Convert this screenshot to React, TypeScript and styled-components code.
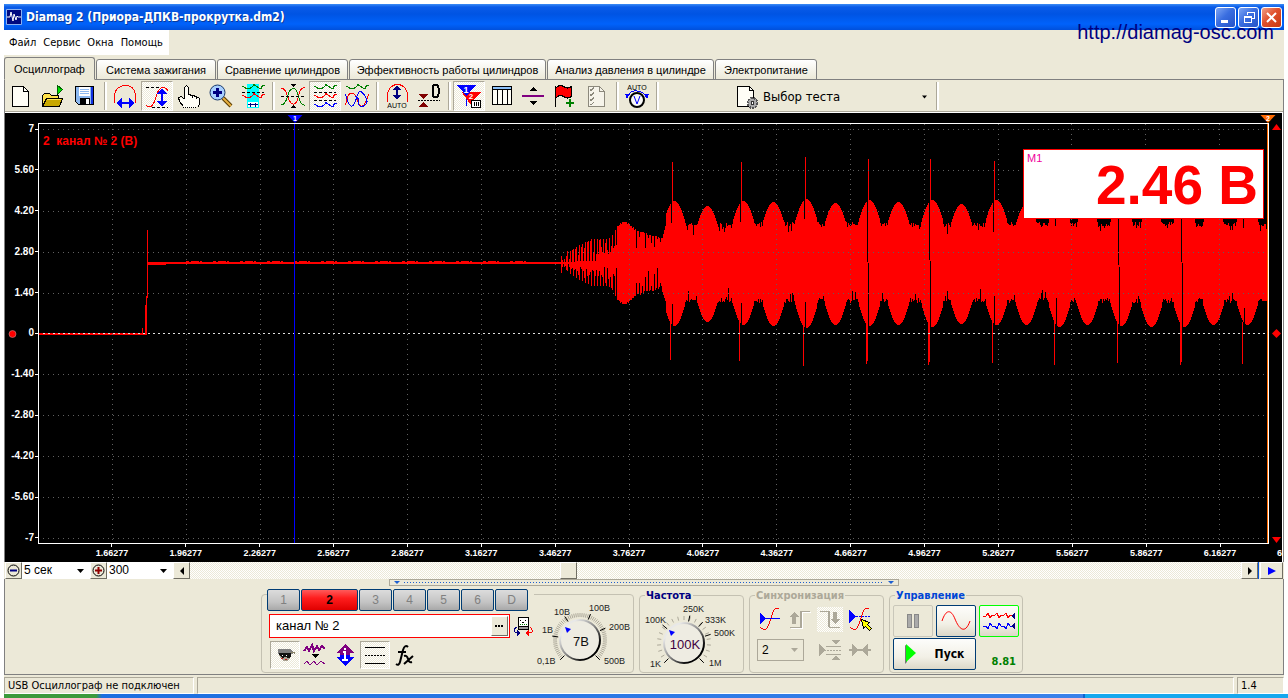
import React from "react";
import styled, { createGlobalStyle, css } from "styled-components";

const face = "#ece9d8";
const shade = "#aca899";
const sans = `"Liberation Sans", Arial, sans-serif`;
const ui = `"DejaVu Sans Condensed", "DejaVu Sans", Tahoma, sans-serif`;
const hatch = `repeating-conic-gradient(#ffffff 0 25%, ${face} 0 50%) 0 0 / 2px 2px`;

const Global = createGlobalStyle`
  * { box-sizing: border-box; }
  body { margin: 0; background: #fff; font-family: ${sans}; font-size: 11px; color: #000; }
  button, input, select { font: inherit; color: inherit; margin: 0; padding: 0; border-radius: 0; }
  svg { display: block; flex: none; }
`;

/* ---------- window frame ---------- */

const Page = styled.div`
  position: relative;
  display: flex;
  flex-direction: column;
  min-height: 100vh;
  padding: 4px 4px 0;
  background: #fff;
`;

const TitleBar = styled.header`
  display: flex;
  align-items: center;
  height: 26px;
  padding: 0 2px;
  gap: 4px;
  background: linear-gradient(#3c8cf5 0, #0a5be8 3px, #0054e3 10px, #0062fb 20px, #0050dc 100%);
`;

const Title = styled.h1`
  flex: 1;
  margin: 0;
  color: #fff;
  font: bold 12px/20px ${ui};
  white-space: nowrap;
  text-shadow: 1px 1px 0 #0a3a9a;
`;

const CaptionButtons = styled.div`
  display: flex;
  gap: 2px;
`;

const CaptionButton = styled.button<{ $close?: boolean }>`
  width: 21px;
  height: 21px;
  display: grid;
  place-items: center;
  border: 1px solid #fff;
  border-radius: 3px;
  background: ${(p) =>
    p.$close
      ? "linear-gradient(135deg, #f0a088, #e0502c 45%, #c83810)"
      : "linear-gradient(135deg, #7ea6f4, #3a6ee0 45%, #2452c8)"};
`;

const SiteLink = styled.a`
  position: absolute;
  top: 20px;
  right: 14px;
  font: 20px/24px ${sans};
  color: #000080;
  text-decoration: none;
`;

const Shell = styled.main`
  flex: 1;
  display: flex;
  flex-direction: column;
  background: ${face};
`;

const MenuBar = styled.nav`
  align-self: flex-start;
  display: flex;
  gap: 7px;
  height: 25px;
  padding: 0 6px 0 5px;
  background: #fff;
`;

const MenuItem = styled.button`
  border: 0;
  background: none;
  font: 11px/25px ${ui};
`;

/* ---------- tabs ---------- */

const Tabs = styled.div`
  display: flex;
  align-items: flex-end;
  gap: 1px;
  height: 25px;
  padding-top: 2px;
  box-shadow: inset 0 -1px 0 #808080;
`;

const Tab = styled.button<{ $active?: boolean; $width: number }>`
  flex: 0 1 ${(p) => p.$width}px;
  height: ${(p) => (p.$active ? 23 : 21)}px;
  border: 1px solid #808080;
  border-bottom-color: ${(p) => (p.$active ? face : "#808080")};
  border-radius: 3px 3px 0 0;
  background: ${(p) => (p.$active ? face : `linear-gradient(#fff, ${face})`)};
  font: 11px/18px ${sans};
  white-space: nowrap;
`;

/* ---------- toolbar ---------- */

const Toolbar = styled.div`
  display: flex;
  height: 33px;
  padding: 1px 0;
  border: 1px solid #808080;
  border-width: 0 1px;
  box-shadow: inset 0 -1px 0 #fff, inset 0 -2px 0 ${shade};
`;

const ToolButton = styled.button<{ $pressed?: boolean }>`
  width: 32px;
  height: 30px;
  display: grid;
  place-items: center;
  border: 1px solid transparent;
  background: none;
  ${(p) =>
    p.$pressed &&
    css`
      border-color: ${shade} #fff #fff ${shade};
      background: ${hatch};
    `}
`;

const Separator = styled.span`
  width: 8px;
  height: 28px;
  margin-top: 1px;
  display: flex;
  justify-content: center;
  &::before {
    content: "";
    width: 2px;
    border-left: 1px solid ${shade};
    background: #fff;
  }
`;

const TestButton = styled.button`
  display: flex;
  align-items: center;
  gap: 4px;
  width: 198px;
  margin-left: 74px;
  padding-right: 6px;
  border: 0;
  background: none;
  font: 13px/30px ${ui};
  text-align: left;
  span { flex: 1; }
`;

/* ---------- chart ---------- */

const Chart = styled.section`
  flex: 1;
  min-height: 260px;
  margin: 0 1px;
  display: grid;
  grid-template-columns: 33px minmax(0, 1fr) 13px;
  grid-template-rows: 10px minmax(0, 1fr) 18px;
  border-right: 1px solid #fff;
  background: #000;
  color: #fff;
  outline: 1px solid #808080;
  clip-path: inset(0 -1px 0 -1px);
`;

const MarkerRow = styled.div`
  grid-column: 2;
  position: relative;
`;

const Marker = styled.svg`
  position: absolute;
  bottom: 0;
  transform: translateX(-50%);
  overflow: visible;
`;

const YAxis = styled.ol`
  grid-column: 1;
  grid-row: 2;
  position: relative;
  display: flex;
  flex-direction: column;
  justify-content: space-between;
  margin: 0;
  padding: 0;
  list-style: none;
  font: bold 10px/12px ${sans};
  li { display: flex; align-items: center; justify-content: flex-end; gap: 1px; }
  li::after { content: ""; width: 3px; height: 1px; background: #fff; }
`;

const ZeroMark = styled.svg`
  position: absolute;
  left: 3px;
  top: 50%;
  transform: translateY(-50%);
`;

const Plot = styled.div`
  grid-column: 2;
  grid-row: 2;
  position: relative;
  border: 1px solid #fff;
  svg { width: 100%; height: 100%; position: absolute; }
`;

const PlotTitle = styled.h2`
  position: absolute;
  left: 4px;
  top: 9px;
  margin: 0;
  color: #f00;
  font: bold 12px/16px ${sans};
  white-space: pre;
`;

const Readout = styled.output`
  position: absolute;
  top: 25px;
  right: 4px;
  width: 241px;
  height: 70px;
  display: flex;
  justify-content: space-between;
  padding: 0 5px 0 3px;
  border: 1px solid #f00;
  background: #fff;
  small { color: #f0009c; font: 11px/17px ${sans}; }
  strong { color: #f00; font: bold 55px/70px ${sans}; }
`;

const RightGutter = styled.div`
  grid-column: 3;
  grid-row: 2;
  display: flex;
  flex-direction: column;
  align-items: center;
  justify-content: space-between;
  padding-left: 2px;
`;

const XAxis = styled.ol`
  grid-column: 2;
  grid-row: 3;
  display: grid;
  grid-template-columns: repeat(16, 1fr);
  margin: 0;
  padding: 0 12px 0 37px;
  list-style: none;
  font: bold 9px/12px ${sans};
  text-align: center;
  li::before { content: ""; display: block; width: 1px; height: 3px; margin: 0 auto; background: #fff; }
`;

const NextLabel = styled.span`
  grid-column: 3;
  grid-row: 3;
  padding: 3px 0 0 8px;
  overflow: hidden;
  font: bold 9px/12px ${sans};
`;

/* ---------- scroll strip ---------- */

const ScrollStrip = styled.div`
  display: flex;
  height: 17px;
  margin: 0 1px;
`;

const RaisedButton = styled.button<{ $width?: number }>`
  flex: none;
  width: ${(p) => p.$width ?? 17}px;
  display: grid;
  place-items: center;
  border: 1px solid;
  border-color: #fff #716f64 #716f64 #fff;
  background: ${face};
`;

const Combo = styled.label<{ $width: number }>`
  position: relative;
  width: ${(p) => p.$width}px;
  background: #fff;
  select {
    width: 100%;
    height: 17px;
    padding-left: 2px;
    border: 0;
    background: none;
    appearance: none;
    font: 12px/17px ${sans};
  }
  svg { position: absolute; right: 6px; top: 7px; pointer-events: none; }
`;

const Track = styled.div`
  flex: 1;
  display: flex;
  padding-left: 370px;
  background: ${hatch};
`;

const PlayGroup = styled.div`
  display: flex;
  padding-left: 1px;
  border-left: 1px solid #0054e3;
`;

/* ---------- control panel ---------- */

const Panel = styled.section`
  display: flex;
  flex-direction: column;
  align-items: center;
  height: 96px;
  border: 1px solid #808080;
  border-top: 0;
`;

const Splitter = styled.div`
  display: flex;
  align-items: center;
  gap: 4px;
  width: 510px;
  height: 7px;
  padding: 0 4px;
  border: 1px solid ${shade};
  &::before, &::after {
    content: "";
    border: 3px solid transparent;
    border-top-color: #1c5fd0;
    border-bottom: 0;
  }
  i { flex: 1; height: 1px; background: repeating-linear-gradient(90deg, #1c5fd0 0 1px, transparent 1px 3px); }
`;

const Groups = styled.div`
  display: flex;
  align-items: flex-end;
  gap: 5px;
  height: 87px;
  padding-right: 4px;
`;

const Group = styled.fieldset<{ $width: number; $tone?: string }>`
  width: ${(p) => p.$width}px;
  height: 84px;
  min-width: 0;
  margin: 0;
  padding: 0;
  border: 1px solid #c4c1b2;
  border-radius: 4px;
  legend {
    margin-left: 5px;
    padding: 0 1px;
    color: ${(p) => p.$tone};
    font: bold 11px/13px ${ui};
  }
`;

const ChannelGroup = styled.section`
  display: flex;
  width: 373px;
  height: 79px;
  border: 1px solid #c4c1b2;
  border-radius: 4px;
`;

const ChannelColumn = styled.div`
  display: flex;
  flex-direction: column;
  gap: 3px;
  width: 272px;
  margin-top: -6px;
  padding-left: 5px;
`;

const ChannelRow = styled.div`
  display: flex;
  gap: 1px;
  background: ${face};
`;

const ChannelButton = styled.button<{ $active?: boolean }>`
  width: ${(p) => (p.$active ? 57 : 33)}px;
  height: 22px;
  border: 1px solid #003c74;
  border-radius: 2px;
  color: ${(p) => (p.$active ? "#000" : "#808080")};
  font: ${(p) => (p.$active ? "bold" : "normal")} 12px/18px ${sans};
  background: ${(p) =>
    p.$active ? "linear-gradient(#ff5a5a, #ff1e1e 40%, #e00000)" : "linear-gradient(#dcdcdc, #c4c4c4 60%, #a8a8a8)"};
`;

const NameRow = styled.div`
  display: flex;
  align-items: center;
  gap: 3px;
  padding-left: 2px;
`;

const NameBox = styled.label`
  display: flex;
  width: 241px;
  height: 24px;
  padding: 1px;
  border: 1px solid #f00;
  background: #fff;
  input {
    flex: 1;
    min-width: 0;
    padding-left: 5px;
    border: 0;
    outline: 0;
    background: none;
    font: 13px/18px ${sans};
  }
`;

const IconRow = styled.div`
  display: flex;
  padding-left: 3px;
`;

const SmallTool = styled.button<{ $pressed?: boolean }>`
  width: 30px;
  height: 28px;
  display: grid;
  place-items: center;
  border: 1px solid transparent;
  background: none;
  ${(p) =>
    p.$pressed &&
    css`
      border-color: ${shade} #fff #fff ${shade};
      background: ${hatch};
    `}
`;

const SyncGrid = styled.div`
  display: grid;
  grid-template-columns: repeat(4, 30px);
  grid-template-rows: 28px 26px;
  gap: 4px 0;
  align-items: center;
  justify-items: center;
  margin: 3px 0 0 5px;
`;

const SyncButton = styled.button<{ $hatched?: boolean }>`
  width: 26px;
  height: 25px;
  display: grid;
  place-items: center;
  border: 0;
  background: ${(p) => (p.$hatched ? hatch : "none")};
`;

const SyncSelect = styled.label`
  grid-column: span 2;
  justify-self: start;
  position: relative;
  width: 47px;
  margin-left: 2px;
  select {
    width: 100%;
    height: 22px;
    padding-left: 4px;
    border: 1px solid ${shade};
    background: none;
    appearance: none;
    font: 12px/18px ${sans};
  }
  svg { position: absolute; right: 6px; top: 9px; pointer-events: none; }
`;

const ControlGrid = styled.div`
  display: grid;
  grid-template-columns: 40px 40px 40px;
  grid-template-rows: 32px 32px;
  gap: 1px 3px;
  margin: 3px 0 0 3px;
`;

const ControlButton = styled.button<{ $edge: string; $wide?: boolean }>`
  grid-column: ${(p) => (p.$wide ? "span 2" : "auto")};
  display: flex;
  align-items: center;
  justify-content: center;
  gap: 18px;
  border: 1px solid ${(p) => p.$edge};
  border-radius: 2px;
  background: linear-gradient(#fdfdfb, #f2f0e6 60%, #dcd8c8);
  font: bold 12px/18px ${ui};
  &:disabled { background: ${face}; }
`;

const Rate = styled.output`
  align-self: end;
  justify-self: end;
  padding-right: 3px;
  color: #008000;
  font: bold 11px/16px ${ui};
`;

/* ---------- status ---------- */

const StatusBar = styled.footer`
  display: flex;
  gap: 3px;
  height: 19px;
  padding-top: 2px;
  background: ${face};
`;

const StatusCell = styled.span<{ $width?: number }>`
  flex: ${(p) => (p.$width ? `0 0 ${p.$width}px` : "1")};
  padding-left: 3px;
  border: 1px solid;
  border-color: ${shade} #fff #fff ${shade};
  font: 11px/15px ${ui};
  white-space: nowrap;
`;

const TaskStrip = styled.div`
  height: 4px;
  margin: 0 -4px 0 0;
  background: linear-gradient(90deg, #3c9a3c 0 92px, #1c6fe0 98px, #3a82ea 1079px, #0f62d0 1079px 1081px, #16a8ee 1081px);
`;

/* ---------- trace data ---------- */

const noise = (n: number) => {
  const v = Math.sin(n * 127.1 + 11.7) * 43758.5453;
  return v - Math.floor(v);
};

// Lobes of the running signal: centre x, top y, bottom y
const lobes = [
  [674, 201, 326], [707, 206, 322], [743, 201, 325], [773, 202, 326], [806, 199, 328], [835, 203, 325],
  [869, 200, 326], [898, 202, 325], [932, 200, 327], [961, 204, 324], [996, 200, 325], [1026, 204, 325],
  [1059, 200, 327], [1087, 204, 325], [1121, 200, 326], [1151, 204, 327], [1184, 200, 327], [1213, 204, 325],
  [1247, 200, 325], [1279, 204, 324],
];

// Tooth-gap spikes: x, top y, bottom y, inner slit end on top, slit start below
const spikes = [
  [671, 162, 360, 223, 304], [740, 162, 361, 222, 303], [804, 157, 366, 219, 302], [867, 159, 364, 262, 263],
  [929, 159, 365, 260, 261], [993, 161, 363, 232, 296], [1055, 160, 365, 226, 298], [1118, 160, 363, 265, 267],
  [1181, 160, 365, 262, 263], [1243, 160, 364, 228, 308],
];

function buildTrace() {
  const bars: string[] = [];
  const bar = (x: number, a: number, b: number) => bars.push(`M${x}.5 ${Math.round(a)}V${Math.round(b)}`);
  for (let x = 564; x < 662; x++) {
    let up: number;
    let down: number;
    if (x < 590) {
      const t = Math.sqrt((x - 563) / 27);
      up = 263 - 23 * t;
      down = 263 + 22 * t;
    } else if (x < 610) {
      up = 239 - noise(x);
      down = 286 + noise(x);
    } else if (x < 638) {
      const t = Math.sin(((x - 610) / 28) * Math.PI);
      up = 238 - 17 * t + noise(x) * 2 - (x > 624 ? (x - 624) / 2 : 0) * (1 - t);
      down = 287 + 18 * t - noise(x) * 2 + (x > 624 ? (x - 624) / 2 : 0) * (1 - t);
    } else {
      const t = (x - 638) / 24;
      up = 230 + 8 * t + noise(x) * 2;
      down = 296 - 8 * t - noise(x + 3) * 3;
    }
    if (x < 617) {
      const phase = x % 3;
      if (phase === 1) {
        const weak = x < 596 ? 0.1 : 0.35 + 0.3 * noise(x);
        up = 263 - (263 - up) * weak;
        down = 263 + (down - 263) * (0.1 + 0.5 * noise(x * 2));
      } else if (phase === 2) {
        up = 263 - (263 - up) * (0.3 + 0.7 * noise(x * 3));
        down = 263 + (down - 263) * (0.3 + 0.7 * noise(x * 7));
      }
    } else if (x > 633 && x % 3 === 0) {
      up += 18 * noise(x * 7);
      down -= 22 * noise(x * 9);
    }
    bar(x, up, Math.max(down, 264));
  }
  for (let x = 662; x < 1268; x++) {
    let up = 222 + 5 * noise(x) + (noise(x * 3) > 0.85 ? 9 * noise(x * 2) : 0);
    let down = 303 - 5 * noise(x + 2) - (noise(x * 4) > 0.87 ? 12 * noise(x * 6) : 0);
    for (const [c, top, bottom] of lobes) {
      const d = Math.abs(x - c) / 15;
      if (d < 1) {
        const t = Math.cos((d * Math.PI) / 2);
        const ripple = t < 0.5 ? 3 * noise(x * 11) : 0;
        up = Math.min(up, top + 36 * (1 - t) + ripple);
        down = Math.max(down, bottom - 39 * (1 - t) - ripple);
      }
    }
    if (x < 666) {
      up = Math.max(up, 222 + (666 - x) * 4);
      down = Math.min(down, 304 - (666 - x) * 3);
    }
    bar(x, up, down);
  }
  return bars.join("");
}

const trace = buildTrace();
const slits = spikes.map(([x, , , a, b]) => `M${x}.5 199V${a}M${x + 1}.5 ${b}V328`).join("");
const needles = spikes
  .map(([x, top, bottom]) => `M${x + 1}.5 ${top}V203M${x - 1}.5 322V${bottom}${x === 929 || x === 1181 || x === 867 ? `M${x}.5 324V${bottom - 3}` : ""}`)
  .join("");

const yLabels = ["7", "5.60", "4.20", "2.80", "1.40", "0", "-1.40", "-2.80", "-4.20", "-5.60", "-7"];
const xLabels = Array.from({ length: 16 }, (_, i) => (1.66277 + i * 0.3).toFixed(5));
const gridX = xLabels.map((_, i) => Math.round(112 + i * 73.8));
const gridY = yLabels.map((_, i) => Math.round(129 + i * 40.9));

/* ---------- drawings ---------- */

const Ico = ({ children, w = 24, h = 24, smooth }: { children: React.ReactNode; w?: number; h?: number; smooth?: boolean }) => (
  <svg width={w} height={h} viewBox={`0 0 ${w} ${h}`} fill="none" stroke="#000" shapeRendering={smooth ? "auto" : "crispEdges"} aria-hidden="true">
    {children}
  </svg>
);

const Down = ({ color = "#000", size = 7 }: { color?: string; size?: number }) => (
  <svg width={size} height="4" viewBox="0 0 7 4" fill={color} aria-hidden="true"><path d="M0 0h7L3.500 4z" /></svg>
);

const wave = (y: number) => `M0.500 ${y - 2}q2 0 4 2t5 0 3-3 4 2 4 1 3-3`;
const glyph = { fontFamily: "Liberation Sans, sans-serif", stroke: "none" };

const IconNew = () => <Ico><path fill="#fffef6" d="M3.500 2.500h11l5 5v15h-16z" /><path d="M14.500 2.500v5h5" /></Ico>;
const IconOpen = () => (
  <Ico>
    <path fill="#ffe14a" d="M1.500 22V11.500l2-2h5l2 2h7v3" />
    <path fill="#c8a800" d="M1.500 22.500l4-8h16l-3 8z" /><path stroke="#ffe85a" d="M6 15.500h14" />
    <path fill="#00e000" stroke="#006000" d="M16.500 1.500v9l5-5z" /><path d="M16.500 10v2" />
  </Ico>
);
const IconSave = () => (
  <Ico>
    <path fill="#8cb8f0" d="M2.500 2.500h18v18h-15l-3-3z" /><path fill="#1030e0" stroke="none" d="M18 3h2v17h-2z" />
    <path fill="#fff" stroke="none" d="M6 3h11v9H6z" /><path stroke="#8cb8f0" d="M7 5.500h9M7 7.500h9M7 9.500h9" />
    <path fill="#000" stroke="none" d="M7 14h10v7H7z" /><path fill="#fff" stroke="none" d="M13 15h3v5h-3z" />
  </Ico>
);
const IconArc = () => (
  <Ico><path stroke="#f00" d="M1.500 18.500v-6C1.500 5 7 1.500 12.500 1.500S22.500 5 22.500 12.500v6" />
    <path stroke="#00f" strokeWidth="2" d="M5 19h14" /><path fill="#00f" stroke="none" d="M3 19l6-5v10zM22 19l-6-5v10z" /></Ico>
);
const IconAmp = () => (
  <Ico><path strokeDasharray="3 2" d="M1 3.500h15M7 23.500h16" /><path stroke="#f00" d="M1 21.500q5 4 8-3l4-11q3-6 8-3l2 2" />
    <path stroke="#00f" strokeWidth="2" d="M17 8v11" /><path fill="#00f" stroke="none" d="M17 4l5 6H12zM17 23l5-6H12z" /></Ico>
);
const IconHand = () => (
  <Ico><path fill="#fffef6" stroke="none" d="M8 2l3 1v7l11 4v6l-3 4H7l-5-8 1-2 4 1z" />
    <path d="M7.500 15V3.500l2-2 2 2V11M11.500 10.500l4 1v2M15.500 11.500l4 1v2M19.500 12.500l3 2v6l-2 3M7.500 15.500l-3-3-3 1 1 4 4 5" />
    <path strokeDasharray="1 1" d="M6 23.500h14" /></Ico>
);
const IconZoom = () => (
  <Ico smooth><path stroke="#5a3c00" strokeWidth="4" d="M14 14l8 8" /><path stroke="#e8b040" strokeWidth="2" d="M14 14l8 8" />
    <circle cx="8.500" cy="8.500" r="7.500" fill="#a8d0ff" stroke="#1a3a6a" /><path stroke="#000080" strokeWidth="3" d="M4 8.500h9M8.500 4v9" /></Ico>
);
const IconCompare = () => (
  <Ico><path fill="#0ff" stroke="none" d="M6 0h12v18H6z" /><path fill="#fff" stroke="#0ff" d="M6.500 17.500h11v6h-11z" />
    <path stroke="#008000" d={wave(4)} /><path stroke="#f00" d={wave(13)} /><path strokeDasharray="3 2" d="M1 8.500h22" />
    <path stroke="#000080" d="M7 20.500h10M9.500 18.500v4M14.500 18.500v4" /></Ico>
);
const IconCross = () => (
  <Ico><path stroke="#f00" d="M0.500 4q4 1 6 8t5.500 8 5.500-8 6-8" />
    <path stroke="#008000" d="M0.500 21q4-1 6-8.500T12 4.500t5.500 8 6 8.500" /><path strokeDasharray="3 2" d="M0 12.500h24" />
    <path fill="#000" stroke="none" d="M9 0h6l-3 3zM9 24h6l-3-3z" /></Ico>
);
const IconTriple = () => (
  <Ico><path stroke="#008000" d={wave(4)} /><path stroke="#f00" d={wave(13)} /><path stroke="#00f" d={wave(22)} />
    <path strokeDasharray="3 2" d="M1 8.500h22M1 16.500h22" /></Ico>
);
const IconOverlay = () => (
  <Ico><path stroke="#008000" d={wave(4)} /><path stroke="#f00" d="M0.500 21q2-12 6-12t6 7 5 6 6-12" /><path stroke="#00f" d="M0.500 10q3 12 6 12t5-8 5-6 5 7-3 7-5-4-3-5" /></Ico>
);
const IconAutoV = () => (
  <Ico><path stroke="#f00" d="M2.500 18v-6C2.500 5 7 .5 12.500 .5S22.500 5 22.500 12v6" /><path stroke="#000080" strokeWidth="2" d="M12 4v9" />
    <path fill="#000080" stroke="none" d="M12 1l4 5H8zM12 16l4-5H8z" /><text x="12" y="24" textAnchor="middle" fontSize="7" fill="#000" {...glyph}>AUTO</text></Ico>
);
const IconZero = () => (
  <Ico><path fill="#800000" stroke="none" d="M1 10h10l-5 5zM1 23h10l-5-5z" /><path strokeDasharray="2 1" d="M1 16.500h22" />
    <rect x="15.500" y="1" width="6" height="12" rx="3" strokeWidth="2" /></Ico>
);
const IconMarkers = () => (
  <Ico><path stroke="#00f" d="M9.500 9v13" /><path fill="#f00" stroke="#f00" d="M5 8.500h18l-8 8v6" /><path fill="#00f" stroke="none" d="M0 1h19L9.500 12z" />
    <text x="9" y="9" textAnchor="middle" fontSize="9" fontWeight="bold" fill="#fff" {...glyph}>1</text>
    <text x="14" y="15" textAnchor="middle" fontSize="8" fontWeight="bold" fill="#fff" {...glyph}>2</text>
    <path fill="#fff" d="M14.500 16.500h9v7h-9z" /><path d="M17.500 18v4M19.500 18v4M21.500 18v4" /></Ico>
);
const IconTable = () => (
  <Ico><path fill="#fffef6" d="M3.500 2.500h19v18h-19z" /><path fill="#8cc0f8" d="M3.500 2.500h19v3h-19z" /><path d="M8.500 6v14M13.500 6v14M18.500 6v14" /></Ico>
);
const IconSplit = () => (
  <Ico><path stroke="#800080" strokeWidth="2" d="M1 12h22" /><path fill="#000" stroke="none" d="M8 7h8l-4-4zM8 17h8l-4 4z" /></Ico>
);
const IconFlag = () => (
  <Ico><path fill="#f00" d="M2.500 4.500q4-5 8-2t8 0v10q-4 3-8 0t-8 2z" /><path d="M2.500 2v21" /><path stroke="#008000" strokeWidth="2" d="M13 19h8M17 15v8" /></Ico>
);
const IconList = () => (
  <Ico><path fill="#f6f4ea" stroke="#8c897c" d="M3.500 2.500h11l5 5v15h-16z" /><path stroke="#8c897c" d="M14.500 2.500v5h5M5 5.500l1 1 3-3M5 10.500l1 1 3-3M5 15.500l1 1 3-3M5 20l1 1 3-3" /></Ico>
);
const IconAutoKnob = () => (
  <Ico><text x="12" y="6" textAnchor="middle" fontSize="7" fill="#000" {...glyph}>AUTO</text>
    <path stroke="#00f" d="M2 13q3-7 10-6t10 6" /><path fill="#00f" stroke="none" d="M0 10l5 0-3 5zM24 10h-5l3 5z" />
    <circle cx="12" cy="16" r="7" fill="#f8f8f8" strokeWidth="2" shapeRendering="auto" /><path stroke="#00f" d="M9 12l3 8 3-8" shapeRendering="auto" /></Ico>
);
const IconTest = () => (
  <Ico><path fill="#fffef6" d="M2.500 1.500h12l4 4v16h-16z" /><path d="M14.500 1.500v4h4" />
    <circle cx="17.500" cy="18" r="5" fill="#aaa" stroke="#555" strokeWidth="2" strokeDasharray="2 1" /><circle cx="17.500" cy="18" r="1.500" fill="#fff" stroke="#333" /></Ico>
);
const IconApp = () => (
  <svg width="16" height="16" viewBox="0 0 16 16" aria-hidden="true"><path fill="#000a80" stroke="#8ab0f0" d="M.5 .5h15v15H.5z" />
    <path fill="none" stroke="#fff" d="M1 8h3l1-5 2 9 1-7 2 6 1-4 1 1h3" /></svg>
);

const IconEye = () => (
  <Ico h={20}><path fill="#808080" stroke="none" d="M5 4h13l2 3v2H5z" /><path fill="#a8a090" stroke="none" d="M6 9h12l-1 5-3 2h-4l-3-3z" />
    <path fill="#111" stroke="none" d="M6 8h12v4l-3 1-3-1-3 1-2-2z" /><path stroke="#8a8468" d="M18 7h3v2" /><path stroke="#c02020" d="M8 13.500h2M12 14.500h2" /><path stroke="#fff" d="M9 10.500h1M13 10.500h1" /></Ico>
);
const IconFilter = () => (
  <Ico><path stroke="#800080" strokeWidth="2" d="M1 8l3-4 2 4 3-6 2 6 3-5 2 4 3-4 3 3" /><path fill="#000" stroke="none" d="M8 11h8l-4 4z" />
    <path stroke="#800080" d="M1 21l3-3 3 4 4-4 3 4 4-4 4 3" /></Ico>
);
const IconInvert = () => (
  <Ico><path fill="#800080" stroke="none" d="M12 1l9 9h-4v2H7v-2H3z" /><path fill="#00f" stroke="none" d="M12 23l9-9h-4v-2H7v2H3z" /><path stroke="#fff" strokeWidth="2" d="M10 9h2v7M9 17h6M12 5v2" /></Ico>
);
const IconLines = () => <Ico><path d="M2 4.500h20M2 20.500h20" /><path strokeDasharray="2 1" d="M2 12.500h20" /></Ico>;
const IconFx = () => (
  <Ico smooth><path strokeWidth="2" d="M15 4q-3-3-5 3L7 19q-1 4-4 2M5 9h8" /><path strokeWidth="2" d="M11 13q3-1 4 3t4 3M20 13l-9 8" /></Ico>
);
const IconProbe = () => (
  <Ico w={20} h={20}><path fill="#fff" d="M5.500 1.500h10v9h-10z" /><path fill="#9a9a9a" d="M5.500 10.500h10v3h-10z" /><path stroke="#008000" strokeDasharray="1 1" d="M7 8.500h7" /><path d="M7 4h1M12 4h1M9 6h2" />
    <path stroke="#000080" d="M4 11q-4 2-2 5l4 1" /><path fill="#000080" stroke="none" d="M4 14l4 3-4 3z" />
    <path stroke="#f00" d="M17 11q3 2 2 5l-4 1" /><path fill="#f00" stroke="none" d="M16 14l-4 3 4 3z" /></Ico>
);
const IconTrig = ({ dashed }: { dashed?: boolean }) => (
  <Ico><path stroke="#f00" d="M2 20q6 6 9-3l4-12q2-5 6-3" /><path stroke="#00f" strokeDasharray={dashed ? "2 1" : undefined} d={dashed ? "M2 9.500h21" : "M2 11.500h20"} />
    <path fill="#00f" stroke="none" d={dashed ? "M1 3l7 6-7 7z" : "M2 6l6 5-6 6z"} />
    {dashed && <path fill="#ff0" stroke="#000" d="M13.500 12.500l8 3-2 2 4 4-2 2-4-4-2 2z" />}</Ico>
);
const IconRise = () => <Ico><path stroke="#fff" d="M3 21.500h11V5.500h9" /><path stroke={shade} d="M2 20.500h11V4.500h9M12.500 4v16" strokeWidth="1" /><path fill={shade} stroke="none" d="M6 5l5 5H8v7H4v-7H1z" /></Ico>;
const IconFall = () => <Ico><path stroke={shade} d="M2 4.500h9v16h11M10.500 5v15" /><path fill={shade} stroke="none" d="M17 17l5-5h-3V5h-4v7h-3z" /></Ico>;
const IconLevel = () => (
  <Ico><path fill={shade} stroke="none" d="M1 6l6 6-6 6zM13 2h10l-5 4zM13 22h10l-5-4z" /><path stroke={shade} d="M8 8.500h15M8 16.500h15" /><path stroke={shade} strokeDasharray="2 1" d="M6 12.500h17" /></Ico>
);
const IconSqueeze = () => (
  <Ico><path fill={shade} stroke="none" d="M4 6l7 6-7 6zM20 6l-7 6 7 6z" /><path stroke={shade} strokeWidth="2" d="M1 12h22" /></Ico>
);

type DialLabel = [string, number, number];

const Dial = ({ w, cx, cy, value, tone, ticks, labels, marks, label }: {
  w: number; cx: number; cy: number; value: string; tone: string; ticks: number; labels: DialLabel[]; marks: number[]; label: string;
}) => {
  const ray = (deg: number, a: number, b: number) => {
    const r = (deg * Math.PI) / 180;
    return `M${cx + a * Math.sin(r)} ${cy - a * Math.cos(r)}L${cx + b * Math.sin(r)} ${cy - b * Math.cos(r)}`;
  };
  const id = `rim-${label}`;
  return (
    <svg width={w} height="76" viewBox={`0 0 ${w} 76`} role="img" aria-label={`${label} ${value}`} fontFamily="Liberation Sans, Arial, sans-serif" fontSize="9">
      <defs>
        <linearGradient id={id} x1="0" y1="0" x2="1" y2="1">
          <stop offset="0.2" stopColor="#e8e8e8" /><stop offset="0.5" stopColor="#888" /><stop offset="0.8" stopColor="#000" />
        </linearGradient>
      </defs>
      <path stroke={shade} fill="none" d={Array.from({ length: ticks + 1 }, (_, i) => ray(-135 + (270 / ticks) * i, 23, 27)).join("")} />
      <path stroke="#000" fill="none" d={marks.map((m) => ray(m, 22, 28)).join("")} />
      <circle cx={cx} cy={cy} r="20" fill="#eeece2" stroke={`url(#${id})`} strokeWidth="2" />
      <path fill="#00f" d={`M${cx - 15} ${cy - 13}l6 2-4 4z`} />
      <text x={cx + 1} y={cy + 6} textAnchor="middle" fontSize="13" fill={tone}>{value}</text>
      {labels.map(([t, x, y]) => <text key={t} x={x} y={y} fill="#222">{t}</text>)}
    </svg>
  );
};

/* ---------- screen ---------- */

const tools: (null | [string, () => React.ReactElement, boolean?])[] = [
  ["Новый", IconNew], ["Открыть", IconOpen], ["Сохранить", IconSave], null,
  ["Развёртка", IconArc], ["Амплитуда", IconAmp, true], ["Рука", IconHand], ["Лупа", IconZoom], ["Сравнение", IconCompare], null,
  ["Наложение", IconCross], ["Раздельно", IconTriple, true], ["Вместе", IconOverlay], null,
  ["Авто", IconAutoV], ["Ноль", IconZero], null,
  ["Маркеры", IconMarkers, true], ["Таблица", IconTable], ["Разделить", IconSplit], ["Флаг", IconFlag], ["Список", IconList], null,
  ["Автодиапазон", IconAutoKnob], null,
];

const tabs: [string, number][] = [
  ["Осциллограф", 91], ["Система зажигания", 120], ["Сравнение цилиндров", 131],
  ["Эффективность работы цилиндров", 197], ["Анализ давления в цилиндре", 167], ["Электропитание", 102],
];

export default function App() {
  return (
    <>
      <Global />
      <Page>
        <TitleBar>
          <IconApp />
          <Title>Diamag 2 (Приора-ДПКВ-прокрутка.dm2)</Title>
          <CaptionButtons>
            <CaptionButton aria-label="Свернуть"><Ico w={13} h={13}><path stroke="#fff" strokeWidth="3" d="M2 10.500h7" /></Ico></CaptionButton>
            <CaptionButton aria-label="Восстановить"><Ico w={13} h={13}><path stroke="#fff" d="M5 1.500h7v6h-2M5.500 4V2M2 5.500h7v6H2.500V5M2 6.500h7" /></Ico></CaptionButton>
            <CaptionButton $close aria-label="Закрыть"><Ico w={13} h={13} smooth><path stroke="#fff" strokeWidth="2" d="M2 2l9 9M11 2l-9 9" /></Ico></CaptionButton>
          </CaptionButtons>
        </TitleBar>
        <SiteLink href="http://diamag-osc.com">http://diamag-osc.com</SiteLink>
        <Shell>
          <MenuBar>
            {["Файл", "Сервис", "Окна", "Помощь"].map((m) => <MenuItem key={m}>{m}</MenuItem>)}
          </MenuBar>
          <Tabs role="tablist">
            {tabs.map(([t, w], i) => <Tab key={t} role="tab" $active={i === 0} $width={w}>{t}</Tab>)}
          </Tabs>
          <Toolbar>
            {tools.map((t, i) => {
              if (!t) return <Separator key={i} />;
              const [name, Icon, pressed] = t;
              return <ToolButton key={i} aria-label={name} $pressed={pressed}><Icon /></ToolButton>;
            })}
            <TestButton><IconTest /><span>Выбор теста</span><Down size={5} /></TestButton>
            <Separator />
          </Toolbar>

          <Chart>
            <MarkerRow>
              <Marker width="15" height="8" viewBox="0 0 15 8" style={{ left: "20.840%" }}>
                <path fill="#00f" d="M0 0h15L7.500 8z" /><text x="7.500" y="6" textAnchor="middle" fontSize="7" fontWeight="bold" fill="#fff" fontFamily="Liberation Sans, sans-serif">1</text>
              </Marker>
              <Marker width="15" height="8" viewBox="0 0 15 8" style={{ left: "99.900%" }}>
                <path fill="#ff6a00" d="M0 0h15L7.500 8z" /><text x="7.500" y="6" textAnchor="middle" fontSize="7" fontWeight="bold" fill="#fff" fontFamily="Liberation Sans, sans-serif">2</text>
              </Marker>
            </MarkerRow>
            <YAxis>
              {yLabels.map((y) => <li key={y}>{y}</li>)}
              <ZeroMark width="9" height="9" viewBox="0 0 9 9"><circle cx="4.500" cy="4.500" r="3.500" fill="#f00" stroke="#c88" strokeOpacity="0.6" /></ZeroMark>
            </YAxis>
            <Plot>
              <svg viewBox="39 124 1229 419" preserveAspectRatio="none" fill="none" shapeRendering="crispEdges" aria-hidden="true">
                <path stroke="#f00" d={trace} />
                <path stroke="#000" d={slits} />
                <path stroke="#f00" d={needles} />
                <path stroke="#f00" strokeWidth="2" d="M39 334H146M148 263H566" />
                <path stroke="#f00" d="M146.500 335V296M147.500 298V230M145.500 334V305M148 264.500H166M142.500 328V334M561.500 256V273M562.500 260V267M567.500 251V264" />
                <path stroke="#f00" strokeDasharray="3 2 8 1 2 11" d="M186 261.500H532" />
                <path stroke="#606060" strokeDasharray="1 4" d={gridY.filter((_, i) => i !== 5).map((y) => `M43 ${y}.5H1268`).join("")} />
                <path stroke="#606060" strokeDasharray="1 4" d={gridX.map((x) => `M${x}.5 124V543`).join("")} />
                <path stroke="#e0e0e0" strokeDasharray="2 3" d="M43 333.500H1268" />
                <path stroke="#00f" d="M294.500 124V543" />
                <path stroke="#ff6a00" d="M1267.500 124V543" />
              </svg>
              <PlotTitle>{"2  канал № 2 (В)"}</PlotTitle>
              <Readout><small>М1</small><strong>2.46 В</strong></Readout>
            </Plot>
            <RightGutter>
              <svg width="9" height="7" viewBox="0 0 9 7" fill="#f00"><path d="M4.500 1L9 7H0z" /></svg>
              <svg width="9" height="9" viewBox="0 0 9 9" fill="#f00"><path d="M4.500 0L9 4.500 4.500 9 0 4.500z" /></svg>
              <svg width="9" height="7" viewBox="0 0 9 7" fill="#f00"><path d="M0 0h9L4.500 6z" /></svg>
            </RightGutter>
            <XAxis>{xLabels.map((x) => <li key={x}>{x}</li>)}</XAxis>
            <NextLabel>6</NextLabel>
          </Chart>

          <ScrollStrip>
            <RaisedButton aria-label="Уменьшить"><Ico w={13} h={13} smooth><circle cx="6.500" cy="6.500" r="5.500" /><path stroke="#000080" strokeWidth="2" d="M3 6.500h7" /></Ico></RaisedButton>
            <Combo $width={68}><select aria-label="Длительность"><option>5 сек</option></select><Down /></Combo>
            <RaisedButton aria-label="Увеличить"><Ico w={13} h={13} smooth><circle cx="6.500" cy="6.500" r="5.500" /><path stroke="#900000" strokeWidth="2" d="M3 6.500h7M6.500 3v7" /></Ico></RaisedButton>
            <Combo $width={66}><select aria-label="Масштаб"><option>300</option></select><Down /></Combo>
            <RaisedButton aria-label="Влево"><svg width="4" height="8" viewBox="0 0 4 8"><path d="M4 0v8L0 4z" /></svg></RaisedButton>
            <Track><RaisedButton aria-label="Ползунок" /></Track>
            <RaisedButton aria-label="Вправо"><svg width="4" height="8" viewBox="0 0 4 8"><path d="M0 0v8l4-4z" /></svg></RaisedButton>
            <PlayGroup><RaisedButton $width={23} aria-label="Воспроизвести"><svg width="8" height="8" viewBox="0 0 8 8"><path fill="#00f" d="M0 0v8l8-4z" /></svg></RaisedButton></PlayGroup>
          </ScrollStrip>

          <Panel>
            <Splitter><i /></Splitter>
            <Groups>
              <ChannelGroup>
                <ChannelColumn>
                  <ChannelRow>
                    {["1", "2", "3", "4", "5", "6", "D"].map((c) => <ChannelButton key={c} $active={c === "2"}>{c}</ChannelButton>)}
                  </ChannelRow>
                  <NameRow>
                    <NameBox><input aria-label="Имя канала" defaultValue="канал № 2" /><RaisedButton aria-label="Выбрать имя"><Ico w={9} h={3}><path strokeWidth="2" strokeDasharray="2 1" d="M0 1h8" /></Ico></RaisedButton></NameBox>
                    <IconProbe />
                  </NameRow>
                  <IconRow>
                    <SmallTool $pressed aria-label="Видимость"><IconEye /></SmallTool>
                    <SmallTool aria-label="Фильтр"><IconFilter /></SmallTool>
                    <SmallTool aria-label="Инверсия"><IconInvert /></SmallTool>
                    <SmallTool $pressed aria-label="Линии"><IconLines /></SmallTool>
                    <SmallTool aria-label="Функция"><IconFx /></SmallTool>
                  </IconRow>
                </ChannelColumn>
                <Dial label="Напряжение" w={98} cx={46} cy={45} value="7В" tone="#111" ticks={60} marks={[-135, -82, -33, 22, 65, 135]}
                  labels={[["0,1В", 3, 69], ["1В", 8, 38], ["10В", 20, 20], ["100В", 55, 16], ["200В", 75, 35], ["500В", 70, 69]]} />
              </ChannelGroup>

              <Group $width={105} $tone="#000080">
                <legend>Частота</legend>
                <Dial label="Частота" w={103} cx={44} cy={41} value="100K" tone="#400040" ticks={20} marks={[-135, -50, 12, 42, 72, 135]}
                  labels={[["1K", 10, 65], ["100K", 5, 21], ["250K", 43, 10], ["333K", 65, 21], ["500K", 74, 34], ["1M", 69, 64]]} />
              </Group>

              <Group $width={135} $tone="#aca899">
                <legend>Синхронизация</legend>
                <SyncGrid>
                  <SyncButton aria-label="Уровень"><IconTrig /></SyncButton>
                  <SyncButton aria-label="Фронт"><IconRise /></SyncButton>
                  <SyncButton $hatched aria-label="Спад"><IconFall /></SyncButton>
                  <SyncButton aria-label="Выбор уровня"><IconTrig dashed /></SyncButton>
                  <SyncSelect><select aria-label="Канал синхронизации"><option>2</option></select><Down color={shade} /></SyncSelect>
                  <SyncButton aria-label="Порог"><IconLevel /></SyncButton>
                  <SyncButton aria-label="Сжать"><IconSqueeze /></SyncButton>
                </SyncGrid>
              </Group>

              <Group $width={134} $tone="#0046d5">
                <legend>Управление</legend>
                <ControlGrid>
                  <ControlButton $edge="#c9c7ba" disabled aria-label="Пауза"><Ico w={14} h={16}><path fill="#aaa" stroke="#888" d="M1.500 1.500h4v13h-4zM8.500 1.500h4v13h-4z" /></Ico></ControlButton>
                  <ControlButton $edge="#003c74" aria-label="Синус"><Ico w={30} h={20} smooth><path stroke="#f00" d="M1 10C5-2 10-2 14 8S24 24 29 10" /></Ico></ControlButton>
                  <ControlButton $edge="#0f0" aria-label="Сигналы"><Ico w={34} h={20}><path stroke="#f00" d="M1 5h3l2-3 2 5 2-3h3l2-2 2 5 2-3h3l2-2 2 5 2-3h2" /><path stroke="#00f" d="M1 15h3l2 3 2-6 2 3h3l2 3 2-6 2 3h3l2 3 2-6 2 3h2" /><path fill="#000080" stroke="none" d="M33 2v6l-4-3zM33 12v6l-4-3z" /></Ico></ControlButton>
                  <ControlButton $edge="#003c74" $wide><svg width="12" height="20" viewBox="0 0 12 20"><path fill="#777" d="M0 1v19l2-2V2z" /><path fill="#0f0" d="M1 0v18l10-9z" /></svg>Пуск</ControlButton>
                  <Rate>8.81</Rate>
                </ControlGrid>
              </Group>
            </Groups>
          </Panel>
        </Shell>
        <StatusBar>
          <StatusCell $width={190}>USB Осциллограф не подключен</StatusCell>
          <StatusCell>{" "}</StatusCell>
          <StatusCell $width={47}>1.4</StatusCell>
        </StatusBar>
        <TaskStrip />
      </Page>
    </>
  );
}
